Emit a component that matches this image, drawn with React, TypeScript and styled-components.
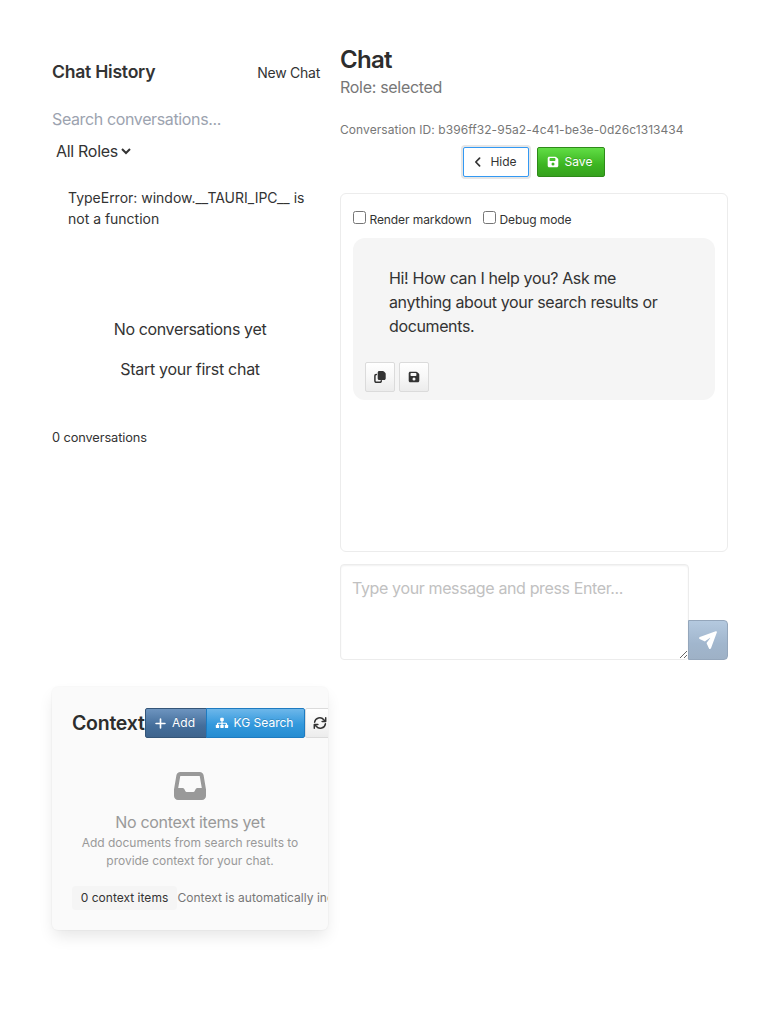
import React from "react";
import styled, { createGlobalStyle, css } from "styled-components";
import { FaPlus } from "react-icons/fa6";

const GlobalStyle = createGlobalStyle`
  *, *::before, *::after { box-sizing: border-box; }
  body {
    margin: 0;
    background: #fff;
    color: #333;
    font: 400 16px/24px Inter, "Liberation Sans", sans-serif;
    letter-spacing: -0.37px;
  }
  h2, h3, h4, p { margin: 0; }
  button, input, select, textarea { font: inherit; letter-spacing: inherit; color: inherit; margin: 0; }
`;

const Page = styled.main`
  display: grid;
  grid-template-columns: 276px 388px;
  column-gap: 12px;
  align-content: start;
  padding: 44px 40px 0 52px;
  min-height: 1024px;
`;

const Sidebar = styled.aside`
  display: flex;
  flex-direction: column;
  height: 643px;
`;

const HistoryHeader = styled.header`
  display: flex;
  align-items: center;
  justify-content: space-between;
  padding: 16px 8px 0 0;
  height: 41px;
`;

const HistoryTitle = styled.h3`
  padding-bottom: 2px;
  font-size: 17.6px;
  font-weight: 600;
  line-height: 24px;
  letter-spacing: -0.25px;
`;

const PlainButton = styled.button<{ $small?: boolean }>`
  border: 0;
  padding: 0;
  background: none;
  font-size: ${(p) => (p.$small ? "14px" : "16px")};
  letter-spacing: ${(p) => (p.$small ? "-0.25px" : "-0.29px")};
  line-height: 24px;
`;

const SearchInput = styled.input`
  width: 100%;
  height: 24px;
  margin-top: 22px;
  padding: 0;
  border: 0;
  background: none;
  outline: 0;
  &::placeholder { color: #9ca3af; opacity: 1; }
`;

const RoleSelect = styled.select`
  align-self: flex-start;
  height: 24px;
  margin-top: 8px;
  padding: 0;
  border: 0;
  background: none;
  letter-spacing: -0.3px;
`;

const ErrorText = styled.p`
  margin-top: 24px;
  padding: 0 16px;
  font-size: 14px;
  line-height: 21px;
  letter-spacing: -0.01px;
`;

const EmptyHistory = styled.div`
  display: flex;
  flex-direction: column;
  align-items: center;
  gap: 16px;
  margin-top: 88px;
`;

const HistoryCount = styled.p`
  margin-top: 47px;
  font-size: 12.8px;
  line-height: 20px;
  letter-spacing: -0.1px;
`;

const ChatHeader = styled.header`
  display: flex;
  flex-direction: column;
`;

const ChatTitle = styled.h2`
  font-size: 24px;
  font-weight: 600;
  line-height: 27px;
  padding-top: 2px;
  letter-spacing: -0.7px;
  color: #2d2d2d;
`;

const RoleLine = styled.p`
  margin-top: 2px;
  color: #777;
  letter-spacing: -0.3px;
`;

const ConversationId = styled.p`
  margin-top: 22px;
  font-size: 12px;
  line-height: 18px;
  letter-spacing: 0.065px;
  color: #777;
`;

const HeaderActions = styled.div`
  display: flex;
  justify-content: center;
  gap: 8px;
  margin: 8px 0 16px;
`;

const tones = {
  focused: css`
    color: #333;
    border-color: #3399f3;
    background: #fff;
    box-shadow: 0 0 0 2px rgba(10, 10, 10, 0.1);
  `,
  success: css`
    color: #fff;
    border-color: #2e8a19;
    background: linear-gradient(180deg, #61dd45 0%, #3cb521 60%, #36a21e 100%);
    text-shadow: 0 -1px 0 rgba(0, 0, 0, 0.15);
  `,
  primary: css`
    color: #fff;
    border-color: #345578;
    background: linear-gradient(180deg, #6d94bf 0%, #446e9b 60%, #3e648d 100%);
    text-shadow: 0 -1px 0 rgba(0, 0, 0, 0.15);
  `,
  info: css`
    color: #fff;
    border-color: #1e7bc0;
    background: linear-gradient(180deg, #6db7ea 0%, #3399dd 55%, #258cd1 100%);
    text-shadow: 0 -1px 0 rgba(0, 0, 0, 0.15);
  `,
  light: css`
    color: #333;
    border-color: #dbdbdb;
    background: linear-gradient(180deg, #fff 0%, #f7f7f7 50%, #ececec 100%);
  `,
};

const Button = styled.button<{
  $tone: keyof typeof tones;
  $width: number;
  $corners?: string;
  $gap?: number;
}>`
  display: flex;
  flex: none;
  align-items: center;
  justify-content: center;
  gap: ${(p) => p.$gap ?? 8}px;
  width: ${(p) => p.$width}px;
  height: 30px;
  padding: 0;
  border: 1px solid;
  border-radius: ${(p) => p.$corners ?? "2px"};
  font-size: 12px;
  line-height: 18px;
  letter-spacing: 0;
  white-space: nowrap;
  ${(p) => tones[p.$tone]}
  svg { flex: none; }
`;

const ButtonLabel = styled.span`
  padding-right: 3px;
`;

const Messages = styled.section`
  height: 359px;
  padding: 12px;
  border: 1px solid #ececec;
  border-radius: 6px;
`;

const Options = styled.div`
  display: flex;
  gap: 11.5px;
  height: 32px;
  padding-top: 4px;
`;

const Option = styled.label`
  display: flex;
  align-items: flex-start;
  gap: 3.5px;
  font-size: 12px;
  line-height: 18px;
  letter-spacing: -0.09px;
  input { width: 13px; height: 13px; margin-top: 1px; }
  span { padding-top: 1px; }
`;

const Bubble = styled.article`
  height: 162px;
  padding: 28px 12px 0 36px;
  border-radius: 12px;
  background: #f5f5f5;
`;

const BubbleText = styled.p`
  width: 290px;
`;

const BubbleActions = styled.div`
  display: flex;
  gap: 4px;
  margin: 24px 0 0 -24px;
`;

const Composer = styled.form`
  display: flex;
  align-items: flex-end;
  margin-top: 12px;
`;

const MessageInput = styled.textarea`
  display: block;
  width: 349px;
  height: 96px;
  padding: 11px;
  border: 1px solid #ececec;
  border-radius: 4px;
  background: #fff;
  box-shadow: inset 0 1px 2px rgba(10, 10, 10, 0.06);
  outline: 0;
  resize: vertical;
  &::placeholder { color: #c1c1c1; opacity: 1; }
`;

const SendButton = styled.button`
  display: flex;
  align-items: center;
  justify-content: center;
  width: 40px;
  height: 40px;
  margin-left: -1px;
  padding: 0;
  border: 1px solid #94a6bb;
  border-radius: 0 4px 4px 0;
  color: #fff;
  background: linear-gradient(180deg, #b4c9df 0%, #a1b6cd 60%, #9eb1c6 100%);
`;

const ContextCard = styled.section`
  height: 243px;
  padding: 21px 20px 0;
  overflow: hidden;
  border-radius: 6px;
  background: #fafafa;
  box-shadow: 0 8px 16px -2px rgba(10, 10, 10, 0.1), 0 0 0 1px rgba(10, 10, 10, 0.02);
`;

const ContextHeader = styled.header`
  display: flex;
  align-items: center;
  height: 30px;
`;

const ContextTitle = styled.h4`
  flex: none;
  width: 73px;
  font-size: 19.5px;
  font-weight: 600;
  line-height: 24px;
  letter-spacing: -0.25px;
  color: #2d2d2d;
`;

const ContextActions = styled.div`
  display: flex;
  flex: none;
  & > button + button { margin-left: -1px; }
  & > button:last-child { margin-left: 0; }
`;

const EmptyContext = styled.div`
  display: flex;
  flex-direction: column;
  align-items: center;
  margin-top: 32px;
  color: #999;
  text-align: center;
`;

const EmptyTitle = styled.p`
  margin-top: 8px;
  letter-spacing: -0.3px;
`;

const EmptyHint = styled.p`
  width: 236px;
  font-size: 12px;
  line-height: 18px;
  letter-spacing: -0.01px;
`;

const ContextFooter = styled.footer`
  display: flex;
  align-items: center;
  margin-top: 16px;
  font-size: 12px;
  line-height: 18px;
  letter-spacing: 0.02px;
  white-space: nowrap;
  color: #777;
`;

const CountTag = styled.span`
  flex: none;
  width: 105px;
  height: 24px;
  border-radius: 4px;
  background: #f5f5f5;
  color: #333;
  line-height: 24px;
  text-align: center;
`;

const FooterNote = styled.span`
  padding-left: 0.5px;
`;

const ChevronIcon = () => (
  <svg width="12" height="12" viewBox="0 0 12 12" fill="none" stroke="currentColor" strokeWidth="1.7" strokeLinecap="round" strokeLinejoin="round">
    <path d="M7.6 2.2 3.8 6l3.8 3.8" />
  </svg>
);

const SaveIcon = () => (
  <svg width="12" height="12" viewBox="0 0 12 12" fill="currentColor" fillRule="evenodd">
    <path d="M2.2.7h6.1c.4 0 .8.2 1.1.5l1.4 1.4c.3.3.5.7.5 1.1v6.1c0 .9-.7 1.5-1.5 1.5H2.2c-.8 0-1.5-.6-1.5-1.5V2.2C.7 1.4 1.4.7 2.2.7zM2.5 2.8v1.5c0 .4.3.7.7.7h4.500c.4 0 .7-.3.7-.7V2.800c0-.4-.3-.7-.7-.7H3.200c-.4 0-.7.3-.7.7zM6 6.400a1.500 1.500 0 1 0 0 3 1.500 1.500 0 0 0 0-3z" />
  </svg>
);

const CopyIcon = () => (
  <svg width="12" height="12" viewBox="0 0 12 12" fill="none">
    <path d="M5.2 0h3.7c.4 0 .8.2 1.1.5l1.2 1.2c.3.3.5.7.5 1.1v4.700c0 .8-.7 1.500-1.500 1.500h-5c-.8 0-1.500-.7-1.500-1.500v-6C3.700.7 4.400 0 5.200 0z" fill="currentColor" />
    <path d="M2.400 3.500H2.100c-.7 0-1.200.5-1.200 1.200v5.400c0 .7.5 1.200 1.200 1.200h4c.7 0 1.200-.5 1.200-1.200v-.3" stroke="currentColor" strokeWidth="1.500" strokeLinecap="round" />
  </svg>
);

const SitemapIcon = () => (
  <svg width="14" height="12" viewBox="0 0 14 12" fill="none">
    <path d="M7 3v5M2.500 8V6.900c0-.4.300-.700.700-.700h7.600c.4 0 .700.300.700.700V8" stroke="currentColor" strokeWidth="1.100" />
    <rect x="5.200" y=".8" width="3.600" height="3.400" rx=".9" fill="currentColor" />
    <rect x=".8" y="7.700" width="3.400" height="3.400" rx=".9" fill="currentColor" />
    <rect x="5.300" y="7.700" width="3.400" height="3.400" rx=".9" fill="currentColor" />
    <rect x="9.800" y="7.700" width="3.400" height="3.400" rx=".9" fill="currentColor" />
  </svg>
);

const RefreshIcon = () => (
  <svg width="14" height="14" viewBox="0 0 14 14" fill="none" stroke="currentColor" strokeWidth="1.5" strokeLinecap="round" strokeLinejoin="round">
    <path d="M1.6 6.2A5.2 5.2 0 0 1 10.8 3.7L12.500 5.200M12.700 1.800v3.600H9.100" />
    <path d="M12.400 7.800A5.200 5.200 0 0 1 3.200 10.300L1.500 8.800M1.300 12.200V8.600H4.900" />
  </svg>
);

const InboxIcon = () => (
  <svg width="32" height="32" viewBox="0 0 32 32" fill="currentColor" fillRule="evenodd">
    <path d="M6.3 2h19.4c2 0 3.6 1.4 3.9 3.3L32 19.5V26c0 2.2-1.8 4-4 4H4c-2.2 0-4-1.8-4-4v-6.5L2.4 5.3C2.7 3.4 4.3 2 6.3 2zM6.3 6 4.2 18h4.3c.8 0 1.4.4 1.8 1.1l1.1 2.2c.3.4.7.7 1.2.7h6.8c.5 0 .9-.3 1.2-.7l1.1-2.2c.4-.7 1-1.1 1.8-1.1h4.3L25.7 6z" />
  </svg>
);

const SendIcon = () => (
  <svg width="18" height="18" viewBox="0 0 18 18" fill="currentColor">
    <path d="M17.900 1.300c.2-.7-.5-1.300-1.200-1.100L.8 6c-.9.300-1 1.600-.2 2l4.800 2.300c.4.200.8.100 1.100-.2l4.200-3.200c.3-.2.600.1.400.4l-3.200 4.200c-.3.300-.3.700-.2 1.100L10 17.400c.4.800 1.600.8 2-.2z" />
  </svg>
);

export default function App() {
  return (
    <>
      <GlobalStyle />
      <Page>
        <Sidebar>
          <HistoryHeader>
            <HistoryTitle>Chat History</HistoryTitle>
            <PlainButton $small>New Chat</PlainButton>
          </HistoryHeader>
          <SearchInput placeholder="Search conversations..." />
          <RoleSelect>
            <option>All Roles</option>
          </RoleSelect>
          <ErrorText>TypeError: window.__TAURI_IPC__ is not a function</ErrorText>
          <EmptyHistory>
            <p>No conversations yet</p>
            <PlainButton>Start your first chat</PlainButton>
          </EmptyHistory>
          <HistoryCount>0 conversations</HistoryCount>
        </Sidebar>

        <section>
          <ChatHeader>
            <ChatTitle>Chat</ChatTitle>
            <RoleLine>Role: selected</RoleLine>
            <ConversationId>
              Conversation ID: b396ff32-95a2-4c41-be3e-0d26c1313434
            </ConversationId>
            <HeaderActions>
              <Button $tone="focused" $width={66} $gap={6}>
                <ChevronIcon />
                <ButtonLabel>Hide</ButtonLabel>
              </Button>
              <Button $tone="success" $width={68} $gap={6}>
                <SaveIcon />
                <ButtonLabel>Save</ButtonLabel>
              </Button>
            </HeaderActions>
          </ChatHeader>
          <Messages>
            <Options>
              <Option>
                <input type="checkbox" />
                <span>Render markdown</span>
              </Option>
              <Option>
                <input type="checkbox" />
                <span>Debug mode</span>
              </Option>
            </Options>
            <Bubble>
              <BubbleText>
                Hi! How can I help you? Ask me anything about your search results or documents.
              </BubbleText>
              <BubbleActions>
                <Button $tone="light" $width={30} aria-label="Copy">
                  <CopyIcon />
                </Button>
                <Button $tone="light" $width={30} aria-label="Save message">
                  <SaveIcon />
                </Button>
              </BubbleActions>
            </Bubble>
          </Messages>
          <Composer>
            <MessageInput placeholder="Type your message and press Enter..." />
            <SendButton type="button" aria-label="Send">
              <SendIcon />
            </SendButton>
          </Composer>
        </section>

        <ContextCard>
          <ContextHeader>
            <ContextTitle>Context</ContextTitle>
            <ContextActions>
              <Button $tone="primary" $width={62} $corners="2px 0 0 2px" $gap={5}>
                <FaPlus size={13} />
                <ButtonLabel>Add</ButtonLabel>
              </Button>
              <Button $tone="info" $width={99} $corners="0 2px 2px 0" $gap={5}>
                <SitemapIcon />
                <ButtonLabel>KG Search</ButtonLabel>
              </Button>
              <Button $tone="light" $width={30} aria-label="Refresh">
                <RefreshIcon />
              </Button>
            </ContextActions>
          </ContextHeader>
          <EmptyContext>
            <InboxIcon />
            <EmptyTitle>No context items yet</EmptyTitle>
            <EmptyHint>
              Add documents from search results to provide context for your chat.
            </EmptyHint>
          </EmptyContext>
          <ContextFooter>
            <CountTag>0 context items</CountTag>
            <FooterNote>Context is automatically included in your chat</FooterNote>
          </ContextFooter>
        </ContextCard>
      </Page>
    </>
  );
}
